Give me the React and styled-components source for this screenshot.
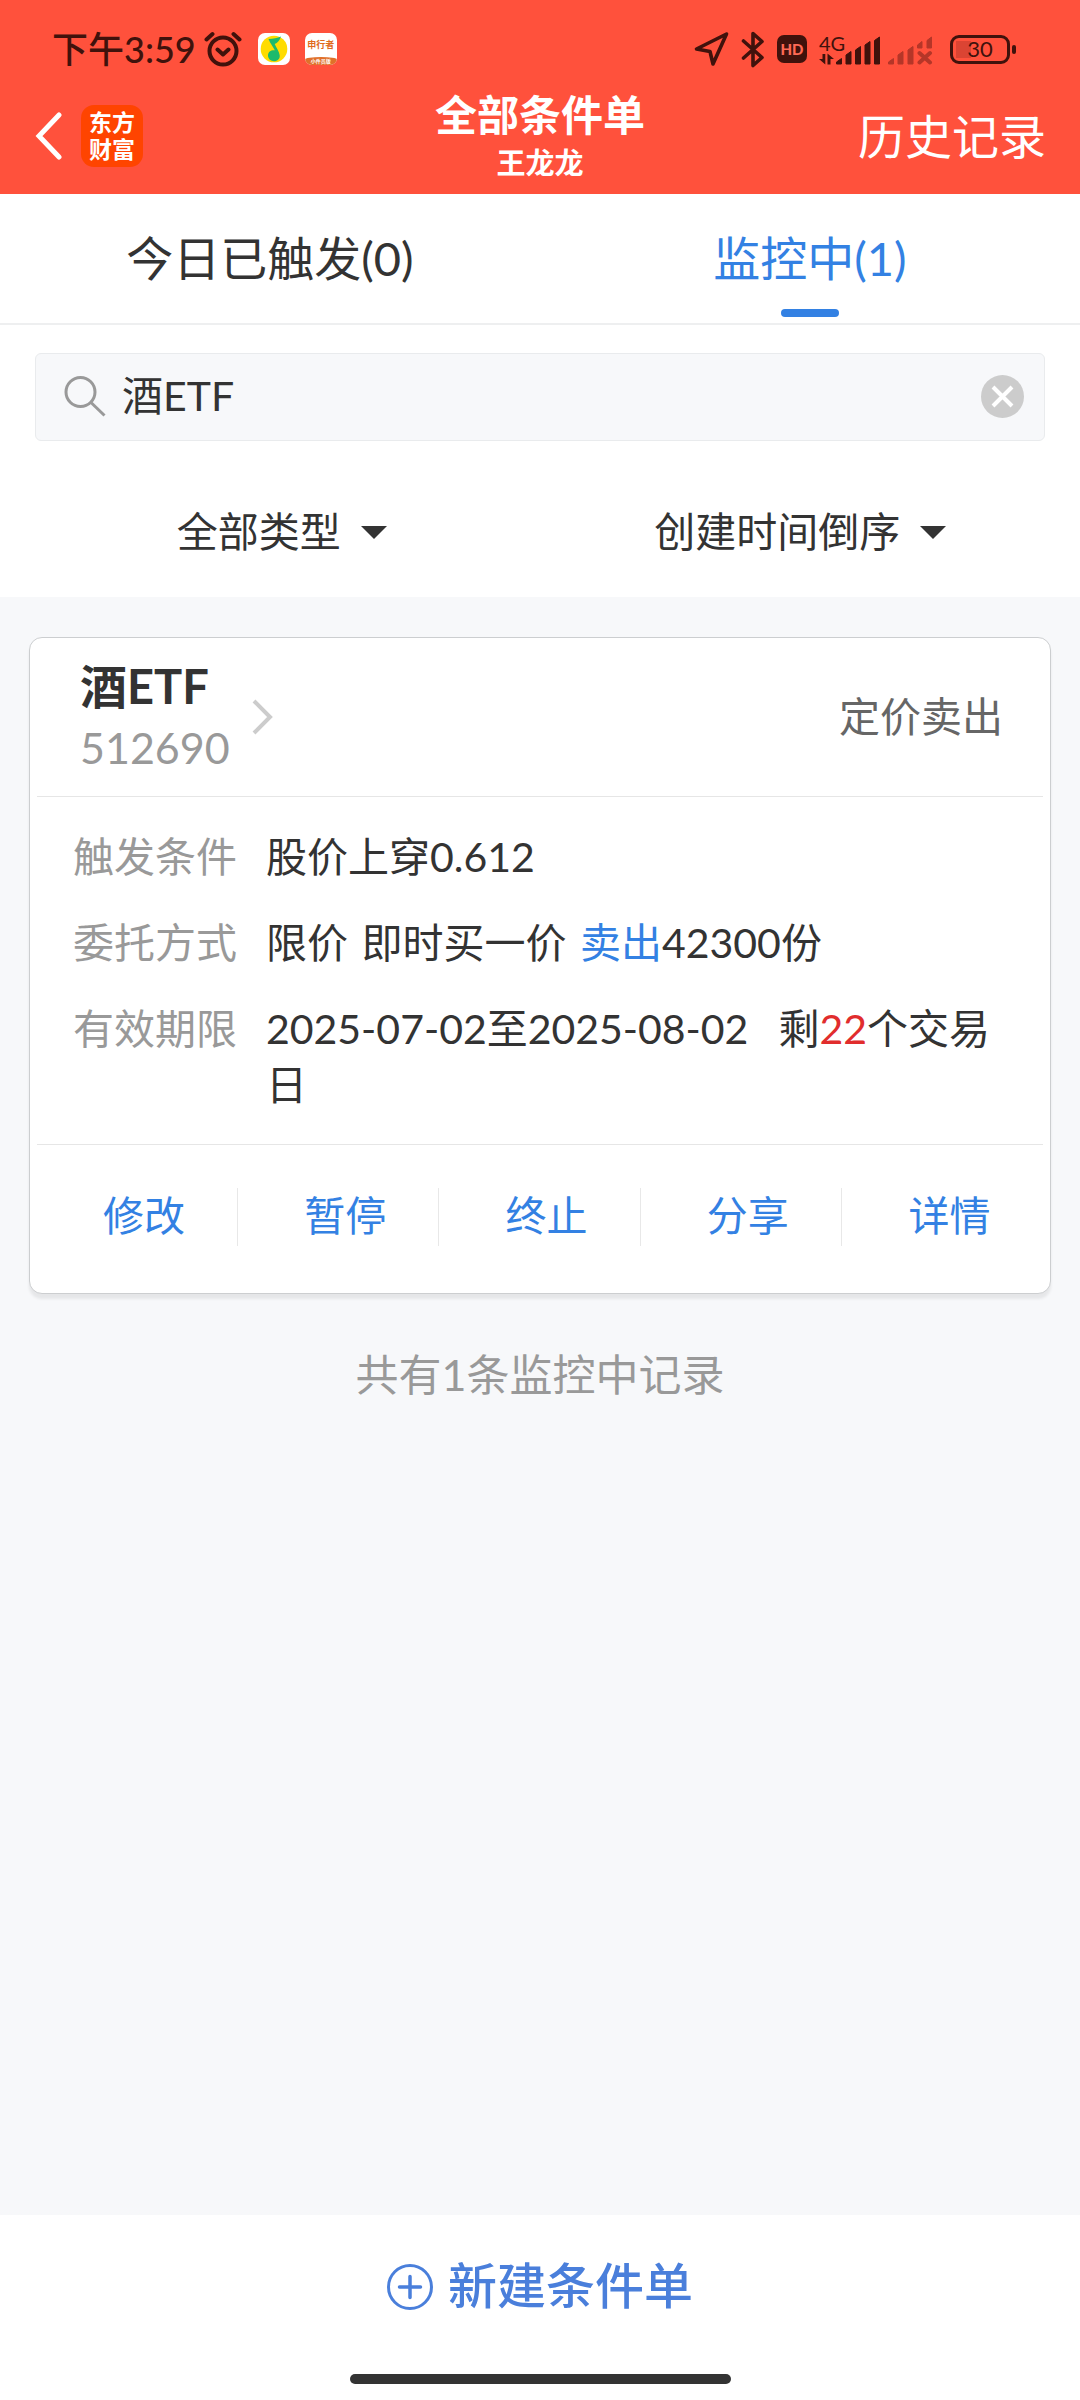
import React, { useState } from "react";
import styled, { createGlobalStyle } from "styled-components";

const GlobalStyle = createGlobalStyle`
  * { box-sizing: border-box; }
  body {
    margin: 0;
    background: #f7f8fa;
    color: #333;
    font-family: Lato, "Noto Sans CJK SC", sans-serif;
    font-size: 41px;
    line-height: 56px;
  }
  button, input, select {
    margin: 0;
    padding: 0;
    border: 0;
    background: none;
    color: inherit;
    font: inherit;
  }
  a { color: inherit; text-decoration: none; }
  svg { display: block; flex: none; }
`;

const Page = styled.div`
  min-height: 100vh;
  display: flex;
  flex-direction: column;
`;

/* ---------- header ---------- */

const Header = styled.header`
  background: #ff513c;
  color: #fff;
`;

const StatusBar = styled.div`
  display: flex;
  align-items: center;
  justify-content: space-between;
  height: 80px;
  padding: 18px 64px 0 52px;
  color: #40120c;
`;

const StatusGroup = styled.div`
  display: flex;
  align-items: center;
  gap: ${(p) => p.$gap}px;
`;

const Clock = styled.span`
  font-size: 36px;
  line-height: 42px;
  font-weight: 500;
`;

const Notices = styled.div`
  display: flex;
  align-items: center;
  gap: 15px;
  margin-left: 8px;
`;

const WalkerBadge = styled.span`
  width: 32px;
  height: 32px;
  border-radius: 7px;
  overflow: hidden;
  background: #fff;
  display: flex;
  flex-direction: column;
  justify-content: space-between;
  text-align: center;
  font-weight: 700;
  white-space: nowrap;
`;

const WalkerName = styled.span`
  color: #e06a1c;
  font-size: 9px;
  line-height: 24px;
`;

const WalkerTag = styled.span`
  background: #e0702a;
  border-radius: 50% 50% 0 0 / 30% 30% 0 0;
  color: #fff;
  font-size: 5px;
  line-height: 8px;
`;

const HdBadge = styled.span`
  width: 30px;
  height: 28px;
  border-radius: 7px;
  background: #40120c;
  color: #ff6a55;
  font-size: 15px;
  line-height: 28px;
  font-weight: 900;
  text-align: center;
`;

const Cellular = styled.div`
  display: flex;
  align-items: flex-end;
  margin-right: 5px;
`;

const Network = styled.span`
  display: flex;
  flex-direction: column;
  width: 17px;
  font-size: 20px;
  line-height: 20px;
  white-space: nowrap;
`;

const SecondSim = styled.span`
  margin-left: 8px;
`;

const Battery = styled.div`
  display: flex;
  align-items: center;
  gap: 2px;
`;

const BatteryBody = styled.span`
  width: 60px;
  height: 29px;
  border: 3px solid #40120c;
  border-radius: 9px;
  background: linear-gradient(#db4433, #db4433) 3px center / 15px 17px no-repeat;
  font-size: 22px;
  line-height: 22px;
  text-align: center;
`;

const BatteryTip = styled.span`
  width: 4px;
  height: 9px;
  border-radius: 2px;
  background: #40120c;
`;

const NavBar = styled.nav`
  display: grid;
  grid-template-columns: 1fr auto 1fr;
  align-items: center;
  height: 114px;
  padding: 0 34px 2px;
`;

const NavStart = styled.div`
  display: flex;
  align-items: center;
  gap: 19px;
`;

const IconButton = styled.button`
  display: flex;
  align-items: center;
  justify-content: center;
  cursor: pointer;
`;

const BrandLogo = styled.a`
  width: 62px;
  height: 62px;
  padding: 4px 0;
  border-radius: 13px;
  background: #ff4400;
  font-size: 23px;
  line-height: 27px;
  font-weight: 700;
  text-align: center;
`;

const TitleBlock = styled.div`
  text-align: center;
`;

const Title = styled.h1`
  margin: 0;
  font-size: 42px;
  line-height: 54px;
  font-weight: 700;
`;

const Subtitle = styled.div`
  font-size: 29px;
  line-height: 42px;
  font-weight: 700;
`;

const HistoryLink = styled.a`
  justify-self: end;
  font-size: 47px;
  line-height: 60px;
`;

/* ---------- tabs, search, filters ---------- */

const Tabs = styled.div`
  display: grid;
  grid-template-columns: 1fr 1fr;
  height: 131px;
  background: #fff;
  border-bottom: 2px solid #eeeff0;
`;

const Tab = styled.button`
  display: flex;
  flex-direction: column;
  align-items: center;
  justify-content: space-between;
  padding: 34px 0 6px;
  color: ${(p) => (p.$active ? "#3381e3" : "#333")};
  font-size: 47px;
  line-height: 60px;
  cursor: pointer;

  &::after {
    content: "";
    width: 58px;
    height: 8px;
    border-radius: 4px;
    background: ${(p) => (p.$active ? "#3381e3" : "transparent")};
  }
`;

const Tools = styled.section`
  padding: 28px 35px 0;
  background: #fff;
`;

const SearchBox = styled.label`
  display: flex;
  align-items: center;
  height: 88px;
  padding: 0 20px 2px 28px;
  border: 1px solid #e9ebed;
  border-radius: 6px;
  background: #f7f8fa;
`;

const SearchInput = styled.input`
  flex: 1;
  min-width: 0;
  height: 56px;
  margin-left: 16px;
  outline: none;
  font-size: 41px;
  line-height: 56px;
`;

const Filters = styled.div`
  display: flex;
  justify-content: space-around;
  height: 156px;
  padding: 63px 0 0 43px;
  margin: 0 -35px;
`;

const Filter = styled.label`
  display: flex;
  align-items: center;
  height: 56px;
  gap: 20px;
`;

const FilterSelect = styled.select`
  appearance: none;
  field-sizing: content;
  height: 56px;
  outline: none;
  line-height: 56px;
  cursor: pointer;
`;

/* ---------- order card ---------- */

const List = styled.main`
  flex: 1;
  padding: 40px 29px;
`;

const Card = styled.article`
  padding: 0 7px;
  border: 1px solid #ccced0;
  border-radius: 13px;
  background: #fff;
  box-shadow: 0 5px 3px rgba(0, 0, 0, 0.07);
`;

const CardHead = styled.header`
  display: flex;
  align-items: center;
  justify-content: space-between;
  height: 159px;
  padding: 0 40px 0 43px;
  border-bottom: 1px solid #e6e6e6;
`;

const StockLink = styled.a`
  display: flex;
  align-items: center;
  gap: 22px;
`;

const StockName = styled.h2`
  margin: 0;
  font-size: 47px;
  line-height: 62px;
  font-weight: 700;
`;

const StockCode = styled.div`
  color: #999;
  font-size: 43px;
  line-height: 62px;
`;

const OrderKind = styled.span`
  color: #666;
`;

const Details = styled.dl`
  display: flex;
  flex-direction: column;
  gap: 30px;
  margin: 0;
  padding: 32px 36px 31px;
  border-bottom: 1px solid #e6e6e6;
`;

const Detail = styled.div`
  display: flex;
  gap: 29px;
`;

const DetailLabel = styled.dt`
  flex: none;
  color: #999;
`;

const DetailValue = styled.dd`
  flex: 1;
  margin: 0;
`;

const Part = styled.span`
  margin-right: ${(p) => p.$space}px;
`;

const Mark = styled.span`
  color: ${(p) => p.$color};
`;

const Actions = styled.div`
  display: grid;
  grid-template-columns: repeat(5, 1fr);
  padding: 43px 0 47px;
`;

const Action = styled.button`
  height: 58px;
  padding: 0 0 4px 14px;
  border-right: 1px solid #e8e8e8;
  color: #3381e3;
  cursor: pointer;

  &:last-child { border-right: 0; }
`;

const Summary = styled.p`
  margin: 51px 0 0;
  color: #999;
  font-size: 43px;
  line-height: 60px;
  text-align: center;
`;

/* ---------- bottom bar ---------- */

const BottomBar = styled.footer`
  display: flex;
  flex-direction: column;
  align-items: center;
  justify-content: space-between;
  height: 185px;
  padding: 40px 0 16px;
  background: #fff;
`;

const CreateButton = styled.button`
  display: flex;
  align-items: center;
  gap: 15px;
  height: 64px;
  color: #4a7fdb;
  font-size: 49px;
  line-height: 60px;
  font-weight: 500;
  cursor: pointer;
`;

const CreateLabel = styled.span`
  padding-bottom: 4px;
`;

const HomeIndicator = styled.div`
  width: 381px;
  height: 10px;
  border-radius: 5px;
  background: #333;
`;

/* ---------- drawings ---------- */

const AlarmIcon = () => (
  <svg width="38" height="36" viewBox="0 0 38 36" fill="none" stroke="currentColor" strokeWidth="4" strokeLinecap="round" strokeLinejoin="round">
    <circle cx="19" cy="20" r="13.5" />
    <path d="M13.5 18.5l5.5 5 5.500-5M2.500 8.500L8.500 3M35.500 8.500L29.500 3" />
  </svg>
);

const MusicIcon = () => (
  <svg width="32" height="32" viewBox="0 0 32 32">
    <rect width="32" height="32" rx="7" fill="#fff" />
    <circle cx="16" cy="16" r="13.300" fill="#ffdc00" />
    <path d="M23 3.500c-3.500 1.500-8 2.500-12.500 2.500 1.500 4 4.500 7.500 6.300 11.300-3.300-.6-6.800 1.300-6.800 5.200 0 3.500 3 5.700 6 5.700 3.500 0 6.200-2.500 5.700-6-.5-3.700-3.200-7.200-5-11.200 2.700-1 5.300-4 6.300-7.500z" fill="#1dba6c" />
  </svg>
);

const LocationIcon = () => (
  <svg width="35" height="36" viewBox="0 0 35 36" fill="none" stroke="currentColor" strokeWidth="3.600" strokeLinejoin="round">
    <path d="M32.500 3L2.500 18l13.500 2.500L19 33z" />
  </svg>
);

const BluetoothIcon = () => (
  <svg width="24" height="37" viewBox="0 0 24 37" fill="none" stroke="currentColor" strokeWidth="3.600" strokeLinecap="round" strokeLinejoin="round">
    <path d="M2.500 10L21 26.500 12 34.500V2.500l9 8L2.500 27" />
  </svg>
);

const DataArrows = () => (
  <svg width="15" height="12" viewBox="0 0 15 12" fill="currentColor">
    <path d="M3.500 1h2.800v10.500L0 6h3.500zM8.500 11.500V.5L15 6h-3.500v5.500z" />
  </svg>
);

const SignalIcon = () => (
  <svg width="44" height="29" viewBox="0 0 44 29" fill="currentColor" stroke="currentColor" strokeLinejoin="round">
    <path d="M.5 28v-2l5-3.500V28zM10 28v-9l5-3.500V28zM19.500 28V14l5-3.500V28zM29 28V9l5-3.500V28zM38.500 28V4.500l5-3.500v27z" />
  </svg>
);

const NoSignalIcon = () => (
  <svg width="45" height="29" viewBox="0 0 45 29" fill="#b53628" stroke="#b53628" strokeLinejoin="round">
    <path d="M.5 28v-2l5-3.500V28zM10 28v-9l5-3.500V28zM20 28V14l5-3.500V28zM29.500 12V9l4.500-3.500V12zM39 12V4.500L43.500 1v11z" />
    <path d="M31.500 17l10.500 9.500M42 17l-10.500 9.500" strokeWidth="4" strokeLinecap="round" />
  </svg>
);

const BackIcon = () => (
  <svg width="28" height="48" viewBox="0 0 28 48" fill="none" stroke="#fff" strokeWidth="5" strokeLinecap="round">
    <path d="M25 3L5 24l20 21" />
  </svg>
);

const SearchIcon = () => (
  <svg width="42" height="42" viewBox="0 0 42 42" fill="none" stroke="#999" strokeWidth="3">
    <circle cx="16.500" cy="17" r="14.500" />
    <path d="M27 27.500l13.500 13" />
  </svg>
);

const ClearIcon = () => (
  <svg width="43" height="43" viewBox="0 0 43 43">
    <circle cx="21.500" cy="21.500" r="21.500" fill="#ccc" />
    <path d="M12 12l19 19M31 12L12 31" stroke="#fff" strokeWidth="4" />
  </svg>
);

const CaretIcon = () => (
  <svg width="26" height="13" viewBox="0 0 26 13">
    <path d="M0 0h26L13 13z" fill="#333" />
  </svg>
);

const ChevronIcon = () => (
  <svg width="21" height="36" viewBox="0 0 21 36" fill="none" stroke="#ccc" strokeWidth="4">
    <path d="M2 2l16 16L2 34" />
  </svg>
);

const PlusIcon = () => (
  <svg width="46" height="46" viewBox="0 0 46 46" fill="none" stroke="currentColor" strokeWidth="3" strokeLinecap="round">
    <circle cx="23" cy="23" r="21.500" />
    <path d="M12.500 23h21M23 12.500v21" strokeWidth="3.500" />
  </svg>
);

const TABS = ["今日已触发(0)", "监控中(1)"];
const ACTIONS = ["修改", "暂停", "终止", "分享", "详情"];

export default function App() {
  const [active, setActive] = useState(1);
  const [query, setQuery] = useState("酒ETF");

  return (
    <Page>
      <GlobalStyle />
      <Header>
        <StatusBar>
          <StatusGroup $gap={8}>
            <Clock>下午3:59</Clock>
            <AlarmIcon />
            <Notices>
              <MusicIcon />
              <WalkerBadge>
                <WalkerName>申行者</WalkerName>
                <WalkerTag>小件员版</WalkerTag>
              </WalkerBadge>
            </Notices>
          </StatusGroup>
          <StatusGroup $gap={12}>
            <LocationIcon />
            <BluetoothIcon />
            <HdBadge>HD</HdBadge>
            <Cellular>
              <Network>
                4G
                <DataArrows />
              </Network>
              <SignalIcon />
              <SecondSim>
                <NoSignalIcon />
              </SecondSim>
            </Cellular>
            <Battery>
              <BatteryBody>30</BatteryBody>
              <BatteryTip />
            </Battery>
          </StatusGroup>
        </StatusBar>
        <NavBar>
          <NavStart>
            <IconButton aria-label="返回">
              <BackIcon />
            </IconButton>
            <BrandLogo href="#home">
              东方
              <br />
              财富
            </BrandLogo>
          </NavStart>
          <TitleBlock>
            <Title>全部条件单</Title>
            <Subtitle>王龙龙</Subtitle>
          </TitleBlock>
          <HistoryLink href="#history">历史记录</HistoryLink>
        </NavBar>
      </Header>

      <Tabs role="tablist">
        {TABS.map((name, i) => (
          <Tab key={name} role="tab" aria-selected={i === active} $active={i === active} onClick={() => setActive(i)}>
            {name}
          </Tab>
        ))}
      </Tabs>

      <Tools>
        <SearchBox>
          <SearchIcon />
          <SearchInput aria-label="搜索" value={query} onChange={(e) => setQuery(e.target.value)} />
          <IconButton aria-label="清除" onClick={() => setQuery("")}>
            <ClearIcon />
          </IconButton>
        </SearchBox>
        <Filters>
          <Filter>
            <FilterSelect aria-label="类型">
              <option>全部类型</option>
            </FilterSelect>
            <CaretIcon />
          </Filter>
          <Filter>
            <FilterSelect aria-label="排序">
              <option>创建时间倒序</option>
            </FilterSelect>
            <CaretIcon />
          </Filter>
        </Filters>
      </Tools>

      <List>
        <Card>
          <CardHead>
            <StockLink href="#512690">
              <div>
                <StockName>酒ETF</StockName>
                <StockCode>512690</StockCode>
              </div>
              <ChevronIcon />
            </StockLink>
            <OrderKind>定价卖出</OrderKind>
          </CardHead>
          <Details>
            <Detail>
              <DetailLabel>触发条件</DetailLabel>
              <DetailValue>股价上穿0.612</DetailValue>
            </Detail>
            <Detail>
              <DetailLabel>委托方式</DetailLabel>
              <DetailValue>
                <Part $space={3}>限价</Part> <Part $space={3}>即时买一价</Part> <Mark $color="#3381e3">卖出</Mark>42300份
              </DetailValue>
            </Detail>
            <Detail>
              <DetailLabel>有效期限</DetailLabel>
              <DetailValue>
                <Part $space={9}>2025-07-02至2025-08-02</Part>&nbsp; 剩<Mark $color="#e12d2d">22</Mark>个交易日
              </DetailValue>
            </Detail>
          </Details>
          <Actions>
            {ACTIONS.map((name) => (
              <Action key={name}>{name}</Action>
            ))}
          </Actions>
        </Card>
        <Summary>共有1条监控中记录</Summary>
      </List>

      <BottomBar>
        <CreateButton>
          <PlusIcon />
          <CreateLabel>新建条件单</CreateLabel>
        </CreateButton>
        <HomeIndicator />
      </BottomBar>
    </Page>
  );
}
